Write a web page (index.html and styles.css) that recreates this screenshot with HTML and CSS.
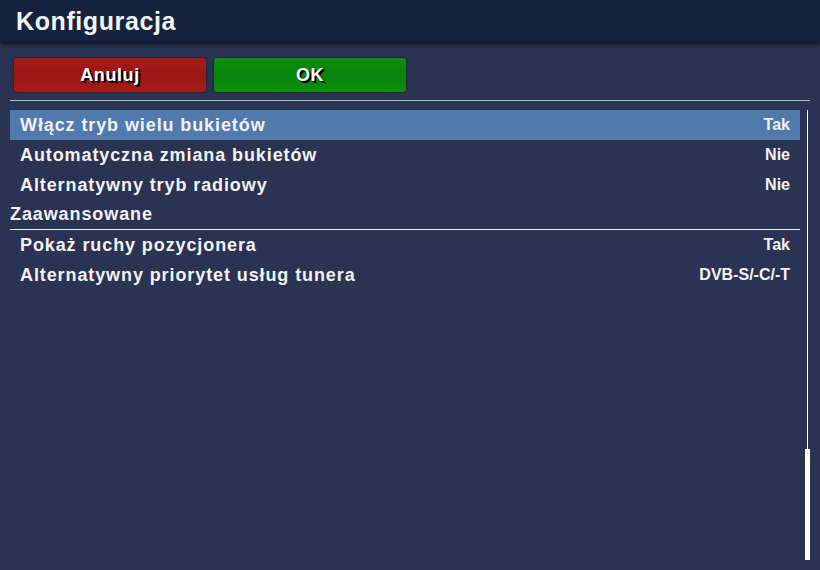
FILE: index.html
```html
<!DOCTYPE html>
<html>
<head>
    <title>Konfiguracja</title>
    <link rel="stylesheet" href="styles.css">
</head>
<body>
    <div class="header">
        <h1>Konfiguracja</h1>
    </div>
    <div class="buttons">
        <div class="btn btn-red">Anuluj</div>
        <div class="btn btn-green">OK</div>
    </div>
    <div class="separator"></div>
    <div class="content">
        <div class="list">
            <div class="row selected"><span>Włącz tryb wielu bukietów</span><span class="value">Tak</span></div>
            <div class="row"><span>Automatyczna zmiana bukietów</span><span class="value">Nie</span></div>
            <div class="row"><span>Alternatywny tryb radiowy</span><span class="value">Nie</span></div>
            <div class="section">Zaawansowane</div>
            <div class="row"><span>Pokaż ruchy pozycjonera</span><span class="value">Tak</span></div>
            <div class="row"><span>Alternatywny priorytet usług tunera</span><span class="value">DVB-S/-C/-T</span></div>
        </div>
        <div class="scrollbar">
            <div class="track"></div>
            <div class="thumb"></div>
        </div>
    </div>
</body>
</html>
```

FILE: styles.css
```css
body {
    margin: 0;
    background-color: #2b3352;
    font-family: "Liberation Sans", Arial, sans-serif;
    color: #f2f2f2;
    height: 570px;
    overflow: hidden;
}

.header {
    height: 42px;
    background-color: #15233f;
    box-shadow: 0 2px 5px rgba(0, 0, 0, 0.7);
    padding-left: 16px;
    position: relative;
}

h1 {
    margin: 0;
    font-size: 25px;
    font-weight: bold;
    line-height: 42px;
    letter-spacing: 0.6px;
    color: #f4f4f4;
}

.buttons {
    display: flex;
    gap: 8px;
    padding: 16px 0 0 14px;
    height: 34px;
}

.btn {
    width: 192px;
    height: 34px;
    border-radius: 3px;
    box-shadow: 0 0 2px rgba(0, 0, 0, 0.8);
    text-align: center;
    line-height: 34px;
    font-size: 18px;
    font-weight: bold;
    letter-spacing: 0.6px;
    color: #ffffff;
    text-shadow: 1px 1px 0 #000, 2px 2px 0 #000;
}

.btn-red {
    background: linear-gradient(#a81b17, #9a1714 50%, #a81b17);
}

.btn-green {
    background: linear-gradient(#0b8f0b, #07830a 50%, #0b8f0b);
}

.separator {
    height: 1px;
    background-color: #b9b9b9;
    margin: 8px 10px 0 10px;
}

.content {
    display: flex;
    margin: 9px 0 0 10px;
    height: 450px;
}

.list {
    width: 790px;
}

.row {
    display: flex;
    justify-content: space-between;
    align-items: center;
    height: 30px;
    padding: 0 10px;
    font-size: 18px;
    font-weight: bold;
    letter-spacing: 0.9px;
}

.row.selected {
    background-color: #5079ac;
}

.value {
    font-size: 16px;
    letter-spacing: 0;
}

.section {
    box-sizing: border-box;
    height: 30px;
    line-height: 28px;
    border-bottom: 1px solid #f2f2f2;
    font-size: 18px;
    font-weight: bold;
    letter-spacing: 0.9px;
}

.scrollbar {
    display: flex;
    flex-direction: column;
    align-items: center;
    width: 5px;
    margin-left: 5px;
}

.track {
    flex: 1;
    width: 1px;
    background-color: #ffffff;
}

.thumb {
    width: 5px;
    height: 111px;
    background-color: #ffffff;
}
```
